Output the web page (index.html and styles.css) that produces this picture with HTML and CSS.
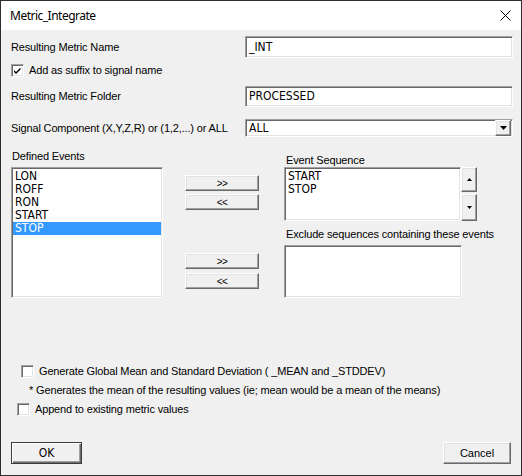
FILE: index.html
```html
<!DOCTYPE html>
<html>
<head>
<meta charset="utf-8">
<link rel="stylesheet" href="styles.css">
</head>
<body>
<div class="window">
  <div class="titlebar">
    <span class="title">Metric_Integrate</span>
    <svg class="close" width="11" height="11" viewBox="0 0 11 11"><path d="M0.5 0.5 L10.5 10.5 M10.5 0.5 L0.5 10.5" stroke="#000" stroke-width="1" fill="none"/></svg>
  </div>
  <div class="content">
    <div class="row row-name">
      <span class="label">Resulting Metric Name</span>
      <div class="field sunken">_INT</div>
    </div>
    <div class="check-row row-suffix">
      <span class="checkbox sunken"><svg width="9" height="9" viewBox="0 0 9 9"><path d="M1 4 L3 6 L7.5 1.5 L7.5 3.5 L3 8 L1 6 Z" fill="#000"/></svg></span>
      <span class="label">Add as suffix to signal name</span>
    </div>
    <div class="row row-folder">
      <span class="label">Resulting Metric Folder</span>
      <div class="field field-folder sunken">PROCESSED</div>
    </div>
    <div class="row row-comp">
      <span class="label">Signal Component (X,Y,Z,R) or (1,2,...) or ALL</span>
      <div class="combo sunken">
        <span class="combo-value">ALL</span>
        <span class="combo-btn raised"><svg width="7" height="4" viewBox="0 0 7 4"><polygon points="0,0 7,0 3.5,4" fill="#000"/></svg></span>
      </div>
    </div>

    <div class="lists">
      <div class="col-left">
        <div class="label lbl">Defined Events</div>
        <div class="listbox listbox-left sunken">
          <div class="item">LON</div>
          <div class="item">ROFF</div>
          <div class="item">RON</div>
          <div class="item">START</div>
          <div class="item selected">STOP</div>
        </div>
      </div>
      <div class="col-mid">
        <div class="btn small raised">&gt;&gt;</div>
        <div class="btn small raised b2">&lt;&lt;</div>
        <div class="btn small raised b3">&gt;&gt;</div>
        <div class="btn small raised b4">&lt;&lt;</div>
      </div>
      <div class="col-right">
        <div class="label lbl">Event Sequence</div>
        <div class="seq">
          <div class="listbox seq-list sunken">
            <div class="item">START</div>
            <div class="item">STOP</div>
          </div>
          <div class="spin">
            <span class="spin-btn up raised"><svg width="5" height="3" viewBox="0 0 5 3"><polygon points="2.5,0 5,3 0,3" fill="#000"/></svg></span>
            <span class="spin-btn down raised"><svg width="5" height="3" viewBox="0 0 5 3"><polygon points="0,0 5,0 2.5,3" fill="#000"/></svg></span>
          </div>
        </div>
        <div class="label lbl excl-lbl">Exclude sequences containing these events</div>
        <div class="listbox excl-list sunken"></div>
      </div>
    </div>

    <div class="check-row row-global">
      <span class="checkbox sunken"></span>
      <span class="label">Generate Global Mean and Standard Deviation ( _MEAN and _STDDEV)</span>
    </div>
    <div class="label note">* Generates the mean of the resulting values (ie; mean would be a mean of the means)</div>
    <div class="check-row row-append">
      <span class="checkbox sunken"></span>
      <span class="label">Append to existing metric values</span>
    </div>

    <div class="buttons">
      <div class="btn ok default">OK</div>
      <div class="btn cancel raised">Cancel</div>
    </div>
  </div>
</div>
</body>
</html>
```

FILE: styles.css
```css
html, body {
  margin: 0;
  padding: 0;
  background: #f0f0f0;
}

.window {
  width: 522px;
  height: 476px;
  box-sizing: border-box;
  border: 1px solid #2e2e2e;
  background: #f0f0f0;
  display: flex;
  flex-direction: column;
  font-family: "Liberation Sans", Arial, sans-serif;
  font-size: 11px;
  color: #000;
  overflow: hidden;
}

.titlebar {
  height: 29px;
  flex: none;
  background: #fff;
  display: flex;
  align-items: center;
  padding-left: 9px;
}

.title {
  font-family: "Noto Sans", "Open Sans", sans-serif;
  font-size: 12px;
  letter-spacing: -0.5px;
}

.close {
  margin-left: auto;
  margin-right: 10px;
}

.content {
  flex: 1;
  display: flex;
  flex-direction: column;
  padding: 0 8px 0 10px;
}

.label {
  line-height: 13px;
  white-space: nowrap;
  letter-spacing: -0.15px;
}

.sunken {
  box-sizing: border-box;
  background: #fff;
  border: 1px solid;
  border-color: #a0a0a0 #fff #fff #a0a0a0;
  box-shadow: inset 1px 1px 0 #696969, inset -1px -1px 0 #e3e3e3;
}

.raised {
  box-sizing: border-box;
  background: #f0f0f0;
  border: 1px solid;
  border-color: #fff #696969 #696969 #fff;
  box-shadow: inset -1px -1px 0 #a0a0a0, inset 1px 1px 0 #e3e3e3;
}

.row {
  display: flex;
  align-items: center;
  justify-content: space-between;
}

.row-name { margin-top: 6px; height: 22px; }
.row-folder { margin-top: 8px; height: 21px; }
.row-comp { margin-top: 12px; height: 18px; }

.field, .combo-value, .item {
  font-family: "DejaVu Sans Condensed", "DejaVu Sans", sans-serif;
  font-stretch: condensed;
  font-size: 12px;
}

.field {
  width: 268px;
  height: 22px;
  padding-left: 3px;
  line-height: 20px;
}

.field-folder {
  height: 21px;
  line-height: 19px;
}

.combo {
  width: 268px;
  height: 18px;
  display: flex;
  align-items: center;
  padding: 1px 1px 1px 3px;
}

.combo-value {
  flex: 1;
  line-height: 14px;
}

.combo-btn {
  width: 16px;
  height: 16px;
  display: flex;
  align-items: center;
  justify-content: center;
}

.check-row {
  display: flex;
  align-items: center;
  height: 15px;
  gap: 5px;
}

.row-suffix { margin-top: 5px; }

.checkbox {
  width: 13px;
  height: 13px;
  flex: none;
  display: flex;
  align-items: center;
  justify-content: center;
}

.lists {
  margin-top: 12px;
  display: flex;
  align-items: flex-start;
  height: 149px;
}

.col-left {
  width: 152px;
  display: flex;
  flex-direction: column;
}

.col-left .lbl { margin-left: 1px; margin-top: 1px; }

.listbox-left {
  margin-top: 4px;
  height: 131px;
  padding: 2px 1px;
}

.item {
  height: 13px;
  line-height: 13px;
  padding-left: 2px;
}

.item.selected {
  background: #3399ff;
  color: #fff;
}

.col-mid {
  width: 74px;
  margin-left: 22px;
  padding-top: 26px;
  display: flex;
  flex-direction: column;
}

.btn {
  display: flex;
  align-items: center;
  justify-content: center;
}

.btn.small {
  height: 16px;
  font-size: 10px;
  letter-spacing: -0.5px;
}

.b2 { margin-top: 3px; }
.b3 { margin-top: 43px; }
.b4 { margin-top: 4px; }

.col-right {
  margin-left: 25px;
  padding-top: 5px;
  display: flex;
  flex-direction: column;
}

.col-right .lbl { margin-left: 2px; }

.seq {
  display: flex;
  height: 54px;
}

.seq-list {
  width: 177px;
  height: 54px;
  padding: 2px 1px;
}

.spin {
  width: 16px;
  display: flex;
  flex-direction: column;
  gap: 2px;
}

.spin-btn {
  display: flex;
  align-items: center;
  justify-content: center;
}

.spin-btn.up { height: 25px; }
.spin-btn.down { height: 27px; }

.excl-lbl { margin-top: 7px; }

.excl-list {
  margin-top: 4px;
  width: 178px;
  height: 53px;
}

.row-global {
  margin-top: 66px;
  margin-left: 10px;
}

.note {
  margin-top: 5px;
  margin-left: 18px;
}

.row-append {
  margin-top: 5px;
  margin-left: 6px;
}

.buttons {
  margin-top: 25px;
  display: flex;
  justify-content: space-between;
}

.btn.ok {
  width: 71px;
  height: 22px;
  box-sizing: border-box;
  background: #f0f0f0;
  border: 1px solid #3c3c3c;
  box-shadow: inset 1px 1px 0 #fff, inset -1px -1px 0 #696969, inset -2px -2px 0 #a0a0a0;
  font-family: "DejaVu Sans Condensed", "DejaVu Sans", sans-serif;
  font-stretch: condensed;
  font-size: 12px;
}

.btn.cancel {
  width: 68px;
  height: 22px;
  margin-right: 2px;
  font-size: 11px;
}
```
